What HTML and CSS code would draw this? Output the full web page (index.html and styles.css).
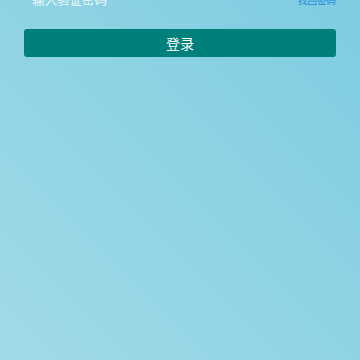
FILE: index.html
```html
<!DOCTYPE html>
<html lang="zh">
<head>
<meta charset="utf-8">
<link rel="stylesheet" href="styles.css">
</head>
<body>
<div class="page">
  <div class="field">
    <span class="placeholder">输入验证密码</span>
    <a class="link">找回密码</a>
  </div>
  <button class="btn">登录</button>
</div>
</body>
</html>
```
FILE: styles.css
```css
html, body {
  margin: 0;
  padding: 0;
  width: 360px;
  height: 360px;
  overflow: hidden;
}
body {
  background: linear-gradient(to bottom left, #7ecce2 0%, #8fd4e4 50%, #a2d9e7 100%);
  font-family: "Noto Sans CJK SC", "Noto Sans", sans-serif;
}
.page {
  padding: 0 24px;
}
.field {
  display: flex;
  justify-content: space-between;
  align-items: center;
  height: 20px;
  margin-top: -10px;
  padding-left: 8px;
}
.placeholder {
  font-size: 12.5px;
  line-height: 20px;
  color: rgba(255, 255, 255, 0.85);
}
.link {
  font-size: 9.5px;
  line-height: 20px;
  color: #1a8ad8;
}
.btn {
  display: block;
  width: 100%;
  height: 28px;
  margin-top: 19px;
  border: none;
  border-radius: 3px;
  background: #00807a;
  color: #ffffff;
  font-family: "Noto Sans CJK SC", "Noto Sans", sans-serif;
  font-size: 14px;
  line-height: 28px;
  padding: 0 0 1px;
}
```
